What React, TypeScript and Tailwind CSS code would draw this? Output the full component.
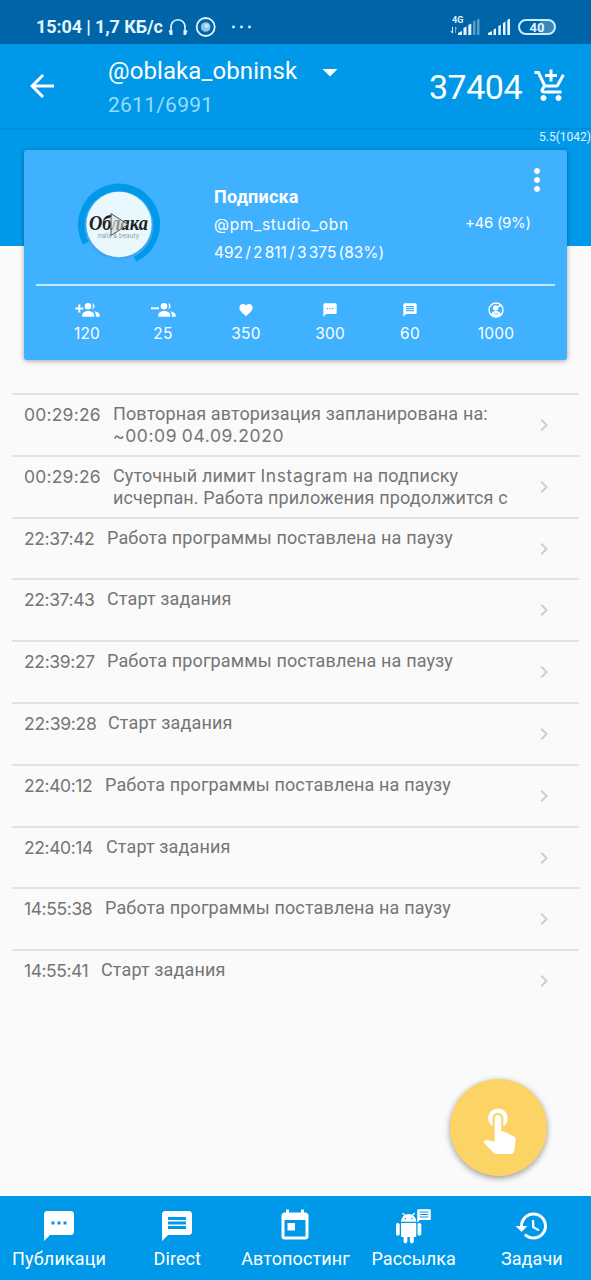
import React from 'react'
import {
    MdAddShoppingCart,
    MdArrowBack,
    MdArrowDropDown,
    MdChevronRight,
    MdFavorite,
    MdHistory,
    MdMessage,
    MdMoreVert,
    MdSms,
    MdToday,
    MdTouchApp,
} from 'react-icons/md'

interface ILogProps {
    time: string
    timeClass: string
    text: string[]
}

const logList: ILogProps[] = [
    {
        time: '00:29:26',
        timeClass: 'w-[89px] tracking-[0.2px]',
        text: ['Повторная авторизация запланирована на:', '~00:09 04.09.2020'],
    },
    {
        time: '00:29:26',
        timeClass: 'w-[89px] tracking-[0.2px]',
        text: ['Суточный лимит Instagram на подписку', 'исчерпан. Работа приложения продолжится с'],
    },
    { time: '22:37:42', timeClass: 'w-[83px] tracking-[-0.4px]', text: ['Работа программы поставлена на паузу'] },
    { time: '22:37:43', timeClass: 'w-[83px] tracking-[-0.4px]', text: ['Старт задания'] },
    { time: '22:39:27', timeClass: 'w-[83px] tracking-[-0.35px]', text: ['Работа программы поставлена на паузу'] },
    { time: '22:39:28', timeClass: 'w-[84px] tracking-[-0.25px]', text: ['Старт задания'] },
    { time: '22:40:12', timeClass: 'w-[81px] tracking-[-0.4px]', text: ['Работа программы поставлена на паузу'] },
    { time: '22:40:14', timeClass: 'w-[82px] tracking-[-0.4px]', text: ['Старт задания'] },
    { time: '14:55:38', timeClass: 'w-[81px] tracking-[-0.4px]', text: ['Работа программы поставлена на паузу'] },
    { time: '14:55:41', timeClass: 'w-[77px] tracking-[-0.45px]', text: ['Старт задания'] },
]

const GroupIcon = ({ minus }: { minus?: boolean }) => (
    <svg className="ml-[2px]" width="26" height="18" viewBox="0 0 26 18" fill="white">
        {minus ? <path d="M0 6.3h8v2H0z" /> : <path d="M3.3 3.500h2v3h3v2h-3v3h-2v-3h-3v-2h3z" />}
        <circle cx="13" cy="5.2" r="3.3" />
        <path d="M7.2 15.8v-2c0-2.4 3.6-3.8 6-3.8s6 1.4 6 3.8v2z" />
        <path d="M17 1.9a3.4 3.4 0 0 1 0 6.6c1.4-1.8 1.4-4.8 0-6.6z" />
        <path d="M19 10.3c2.6.5 5.6 1.5 5.6 3.6v1.9h-3.8v-2c0-1.5-.7-2.6-1.8-3.5z" />
    </svg>
)

const UserCircleIcon = () => (
    <svg width="16" height="16" viewBox="0 0 16 16" fill="none">
        <circle cx="8" cy="8" r="7" stroke="white" strokeWidth="1.4" />
        <circle cx="7.6" cy="6" r="2.7" fill="white" />
        <path d="M3 12.500c.8-2 2.200-3.500 5-3.500s4.200 1.500 5 3.500C10 15.700 6 15.700 3 12.500z" fill="white" />
        <path d="m9.500 5.500 3-2.500" stroke="white" strokeWidth="1.6" />
        <path d="m6.300 11 1.700 1.500 2-1.500" stroke="#40b1ff" strokeWidth=".8" />
    </svg>
)

const AndroidIcon = () => (
    <svg width="36" height="36" viewBox="0 0 36 36" fill="white">
        <path
            transform="translate(-2.6 4.800) scale(1.27)"
            d="M6 18c0 .55.45 1 1 1h1v3.5c0 .83.67 1.5 1.5 1.5s1.5-.67 1.5-1.5V19h2v3.5c0 .83.67 1.5 1.5 1.5s1.5-.67 1.5-1.5V19h1c.55 0 1-.45 1-1V8H6v10zM3.5 8C2.67 8 2 8.67 2 9.5v7c0 .83.67 1.5 1.5 1.5S5 17.33 5 16.5v-7C5 8.67 4.33 8 3.5 8zm17 0c-.83 0-1.5.67-1.5 1.5v7c0 .83.67 1.5 1.5 1.5s1.5-.67 1.5-1.5v-7c0-.83-.67-1.5-1.5-1.5zm-4.97-5.84l1.3-1.3c.2-.2.2-.51 0-.71-.2-.2-.51-.2-.71 0l-1.48 1.48C13.85 1.23 12.95 1 12 1c-.96 0-1.86.23-2.66.63L7.85.15c-.2-.2-.51-.2-.71 0-.2.2-.2.51 0 .71l1.31 1.31C6.97 3.26 6 5.01 6 7h12c0-1.99-.97-3.75-2.47-4.84zM10 5H9V4h1v1zm5 0h-1V4h1v1z"
        />
        <path d="M22.2 1.2h11.600a1 1 0 0 1 1 1v8.800a1 1 0 0 1-1 1H24L21.200 14.500V2.200a1 1 0 0 1 1-1z" />
        <path d="M23.700 4h8.700M23.700 6.500h8.700M23.700 9h8.700" stroke="#0099e9" strokeWidth="1.1" />
    </svg>
)

const stats = [
    { value: '120', icon: <GroupIcon />, className: 'ml-[33px] w-[60px]' },
    { value: '25', icon: <GroupIcon minus />, className: 'ml-[16px] w-[60px]' },
    { value: '350', icon: <MdFavorite size={16} />, className: 'ml-[23px] w-[60px]' },
    { value: '300', icon: <MdSms size={16} />, className: 'ml-[24px] w-[60px]' },
    { value: '60', icon: <MdMessage size={16} />, className: 'ml-[20px] w-[60px]' },
    { value: '1000', icon: <UserCircleIcon />, className: 'ml-[26px] w-[60px]' },
]

const tabs = [
    { label: 'Публикаци', icon: <MdSms size={36} />, className: 'tracking-[0.15px]' },
    { label: 'Direct', icon: <MdMessage size={36} />, className: 'tracking-[0.1px]' },
    { label: 'Автопостинг', icon: <MdToday size={36} />, className: 'tracking-[0.1px]' },
    { label: 'Рассылка', icon: <AndroidIcon />, className: 'tracking-[0.1px]' },
    { label: 'Задачи', icon: <MdHistory size={36} />, className: 'tracking-[0.1px]' },
]

const StatusBar = () => (
    <div className="flex h-11 items-start bg-[#0064a8] pt-[15px] pl-9 text-[#e4f5ff]">
        <span className="w-[130px] text-[18px] leading-6 font-bold tracking-[-0.1px] whitespace-nowrap">
            15:04 | 1,7 КБ/с
        </span>
        <svg className="mt-[2px] ml-[2px]" width="86" height="20" viewBox="0 0 86 20" fill="none">
            <path d="M3 17v-5C1.5-.5 18.5-.5 17 12v5" stroke="currentColor" strokeWidth="1.5" />
            <path d="M.5 13.5 4.5 13v5H2zM19.5 13.5 15.5 13v5H18z" fill="currentColor" />
            <circle cx="37.7" cy="10" r="9" stroke="currentColor" strokeWidth="1.8" />
            <circle cx="37.7" cy="10" r="4.800" fill="#8fc3e9" />
            <circle cx="38.700" cy="8.800" r="2.2" fill="#c4e2f6" />
            <g fill="currentColor">
                <circle cx="65.500" cy="10" r="1.400" />
                <circle cx="73.500" cy="10" r="1.400" />
                <circle cx="81.500" cy="10" r="1.400" />
            </g>
        </svg>
        <div className="mt-px ml-[198px] flex">
            <div className="flex w-[13px] flex-col">
                <span className="h-[9px] text-[9px] leading-[9px] font-bold">4G</span>
                <svg className="-ml-[2px]" width="8" height="9" viewBox="0 0 8 9" fill="none" stroke="currentColor">
                    <path d="M2.500 2v6L.7 6" />
                    <path d="M5.500 8V2l1.500 2" opacity=".5" />
                </svg>
            </div>
            <svg className="-ml-[7px]" width="22" height="20" viewBox="0 0 22 20" fill="currentColor">
                <path d="M0 19v-2l4-2v4zM5.500 19v-7l3-1.500V19zM10.300 19V9l3-1.500V19z" />
                <path d="M15 19V5.500L17.500 4v15zM19 19V4l2.500-1.500V19z" opacity=".4" />
            </svg>
            <svg className="ml-[8px]" width="22" height="20" viewBox="0 0 22 20" fill="currentColor">
                <path d="M0 19v-2l4-2v4zM5.500 19v-5.500l2.500-1.300V19zM10.300 19V10l2.500-1.300V19zM15 19V7l2.500-1.400V19zM19.300 19V4L22 2.500V19z" />
            </svg>
        </div>
        <div className="mt-[4px] ml-[8px] flex h-[16px] w-[38px] items-center justify-center rounded-full border-2 border-[#cdeaff] bg-gradient-to-r from-transparent from-60% to-[#3a87bd] to-60%">
            <span className="text-[13px] leading-none font-bold">40</span>
        </div>
    </div>
)

const Header = () => (
    <div className="relative flex h-[84px] bg-[#0099e9] text-white shadow-[0_1px_2px_rgba(0,0,0,0.15)]">
        <MdArrowBack size={36} className="mt-[24px] ml-[24px]" />
        <div className="mt-[12px] ml-[48px] w-[201px]">
            <p className="text-[24px] leading-[30px] tracking-[0.1px]">@oblaka_obninsk</p>
            <p className="mt-[4px] text-[21px] leading-[30px] tracking-[0.25px] text-[#99dcff]">2611/6991</p>
        </div>
        <MdArrowDropDown size={36} className="mt-[10px] ml-[3px]" />
        <span className="mt-[22px] ml-[81px] w-[104px] text-[34px] leading-[42px] tracking-[-0.5px]">37404</span>
        <MdAddShoppingCart size={36} className="mt-[24px]" />
    </div>
)

const Avatar = () => (
    <svg width="84" height="84" viewBox="0 0 84 84">
        <path d="M10 60.500A36.700 36.700 0 1 1 57.500 75.800" fill="none" stroke="#0099e9" strokeWidth="8.500" />
        <circle cx="42" cy="43.500" r="34.500" fill="#40a6f4" />
        <circle cx="42" cy="42.500" r="32.700" fill="#e8f8fd" />
        <text x="12" y="48" fontFamily="Liberation Serif" fontSize="21" fontStyle="italic" fontWeight="bold" fill="#202020" textLength="59" lengthAdjust="spacingAndGlyphs">
            Облака
        </text>
        <text x="21" y="55.500" fontFamily="Inter" fontSize="6" fill="#8c999d" textLength="41">
            nails &amp; beauty
        </text>
        <path d="M34 31.500v22l17-11z" fill="#d9d9d9" fillOpacity=".6" stroke="#555" strokeWidth="1" />
    </svg>
)

const TaskCard = () => (
    <div className="relative mx-6 -mt-[96px] h-[210px] rounded-[3px] bg-[#40b1ff] text-white shadow-[0_1px_5px_rgba(0,0,0,0.35)]">
        <div className="flex h-[134px]">
            <div className="mt-[32px] ml-[53px]">
                <Avatar />
            </div>
            <div className="mt-[35px] ml-[53px] w-[251px] font-[Inter] text-[15.5px] whitespace-nowrap">
                <p className="font-[Roboto] text-[18px] leading-6 font-bold tracking-[0.2px]">Подписка</p>
                <p className="mt-[4px] leading-6 tracking-[0.7px]">@pm_studio_obn</p>
                <p className="mt-[4px] leading-6 tracking-[-0.05px] [word-spacing:-2px]">492 / 2 811 / 3 375 (83%)</p>
            </div>
            <div className="flex w-[90px] flex-col">
                <MdMoreVert size={36} className="mt-[12px] ml-[54px]" />
                <p className="mt-[13px] font-[Inter] text-[15px] leading-6 tracking-[-0.3px] whitespace-nowrap">+46 (9%)</p>
            </div>
        </div>
        <div className="mx-3 h-[2px] bg-[#c5e8ff]" />
        <div className="flex pt-[14px]">
            {stats.map((stat) => (
                <div key={stat.value} className={`flex shrink-0 flex-col items-center ${stat.className}`}>
                    <div className="flex h-[19px] items-center">{stat.icon}</div>
                    <p className="mt-[3px] font-[Inter] text-[15.5px] leading-6 tracking-[0.2px]">{stat.value}</p>
                </div>
            ))}
        </div>
    </div>
)

// latin words and numbers are set in the wider face, cyrillic stays in Roboto
const LogLine = ({ line }: { line: string }) => (
    <p>
        {line.split(/([~\dA-Za-z][\dA-Za-z:.]*)/).map((part, i) =>
            i % 2 ? (
                <span key={i} className="font-[Inter] text-[17.5px] tracking-[0.6px]">
                    {part}
                </span>
            ) : (
                part
            ),
        )}
    </p>
)

const LogItem = ({ log }: { log: ILogProps }) => (
    <div className="flex h-[61.8px] border-t-2 border-[#e2e2e2] pl-3 text-[#757575]">
        <span className={`mt-[8px] shrink-0 font-[Inter] text-[17.5px] leading-6 ${log.timeClass}`}>{log.time}</span>
        <div className="mt-[8px] flex-1 text-[18px] leading-[22px] tracking-[0.13px] whitespace-nowrap">
            {log.text.map((line) => (
                <LogLine key={line} line={line} />
            ))}
        </div>
        <MdChevronRight size={24} className="mt-[18px] mr-[23px] shrink-0 text-[#cecece]" />
    </div>
)

const App = () => {
    return (
        <div className="relative flex h-[1280px] w-[591px] flex-col overflow-hidden bg-[#fafafa] font-[Roboto,sans-serif]">
            <StatusBar />
            <Header />
            <div className="h-[118px] shrink-0 bg-[#0099e9] pt-[1px] text-right text-[12px] leading-[16px] text-[#e4f5ff]">
                5.5(1042)
            </div>
            <TaskCard />
            <div className="mx-3 mt-[33px] flex-1">
                {logList.map((log, i) => (
                    <LogItem key={i} log={log} />
                ))}
            </div>
            <button className="absolute top-[1079px] left-[450px] flex h-[97px] w-[97px] items-center justify-center rounded-full bg-[#fcd365] text-white shadow-[0_2px_6px_rgba(0,0,0,0.4)]">
                <MdTouchApp size={52} className="mt-px" />
            </button>
            <div className="grid h-[84px] shrink-0 grid-cols-5 bg-[#0099e9] text-white">
                {tabs.map((tab) => (
                    <div key={tab.label} className="flex flex-col items-center pt-[12px]">
                        {tab.icon}
                        <p className={`mt-[3px] text-[18px] leading-6 ${tab.className}`}>{tab.label}</p>
                    </div>
                ))}
            </div>
        </div>
    )
}

export default App
